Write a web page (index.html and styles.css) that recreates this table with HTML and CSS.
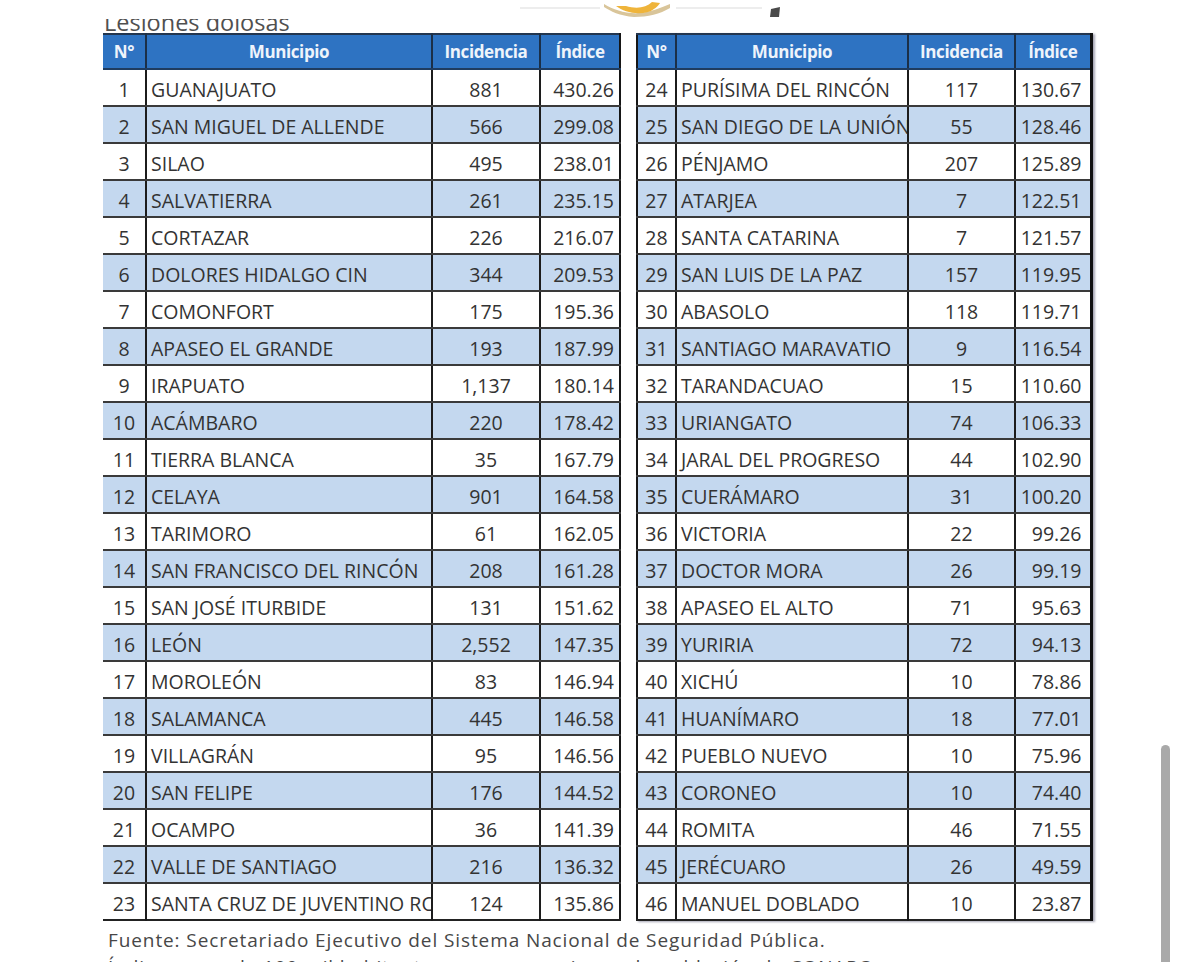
FILE: index.html
```html
<!DOCTYPE html>
<html lang="es">
<head>
<meta charset="utf-8">
<title>Lesiones dolosas</title>
<link rel="stylesheet" href="styles.css">
</head>
<body>
<div class="page">
  <div class="topstrip">
    <svg class="logo-bits" width="1179" height="19" viewBox="0 0 1179 19">
      <line x1="520" y1="8" x2="600" y2="8" stroke="#ededed" stroke-width="2"/>
      <line x1="676" y1="8" x2="762" y2="8" stroke="#ededed" stroke-width="2"/>
      <path d="M604 4 C614 10 626 14 640 13 C650 12 660 8 670 4 L670 8 C660 14 648 17 634 17 C620 16 610 11 604 7 Z" fill="#d9c59a"/>
      <path d="M616 6 C624 12 636 15 648 12 C654 10 658 6 660 3 L652 2 C646 8 636 9 626 6 Z" fill="#efb43a"/>
      <path d="M771 9 L780 7 L779 17 L770 17 Z" fill="#4a4a4a"/>
    </svg>
  </div>
  <div class="titlebox"><span class="title">Lesiones dolosas</span></div>
  <div class="tables">
    <table class="tbl tbl-left">
      <colgroup><col class="c-n1"><col class="c-m1"><col class="c-i1"><col class="c-x1"></colgroup>
      <thead><tr><th>N°</th><th>Municipio</th><th>Incidencia</th><th>Índice</th></tr></thead>
      <tbody>
        <tr><td class="n">1</td><td class="m">GUANAJUATO</td><td class="i">881</td><td class="x">430.26</td></tr>
        <tr><td class="n">2</td><td class="m">SAN MIGUEL DE ALLENDE</td><td class="i">566</td><td class="x">299.08</td></tr>
        <tr><td class="n">3</td><td class="m">SILAO</td><td class="i">495</td><td class="x">238.01</td></tr>
        <tr><td class="n">4</td><td class="m">SALVATIERRA</td><td class="i">261</td><td class="x">235.15</td></tr>
        <tr><td class="n">5</td><td class="m">CORTAZAR</td><td class="i">226</td><td class="x">216.07</td></tr>
        <tr><td class="n">6</td><td class="m">DOLORES HIDALGO CIN</td><td class="i">344</td><td class="x">209.53</td></tr>
        <tr><td class="n">7</td><td class="m">COMONFORT</td><td class="i">175</td><td class="x">195.36</td></tr>
        <tr><td class="n">8</td><td class="m">APASEO EL GRANDE</td><td class="i">193</td><td class="x">187.99</td></tr>
        <tr><td class="n">9</td><td class="m">IRAPUATO</td><td class="i">1,137</td><td class="x">180.14</td></tr>
        <tr><td class="n">10</td><td class="m">ACÁMBARO</td><td class="i">220</td><td class="x">178.42</td></tr>
        <tr><td class="n">11</td><td class="m">TIERRA BLANCA</td><td class="i">35</td><td class="x">167.79</td></tr>
        <tr><td class="n">12</td><td class="m">CELAYA</td><td class="i">901</td><td class="x">164.58</td></tr>
        <tr><td class="n">13</td><td class="m">TARIMORO</td><td class="i">61</td><td class="x">162.05</td></tr>
        <tr><td class="n">14</td><td class="m">SAN FRANCISCO DEL RINCÓN</td><td class="i">208</td><td class="x">161.28</td></tr>
        <tr><td class="n">15</td><td class="m">SAN JOSÉ ITURBIDE</td><td class="i">131</td><td class="x">151.62</td></tr>
        <tr><td class="n">16</td><td class="m">LEÓN</td><td class="i">2,552</td><td class="x">147.35</td></tr>
        <tr><td class="n">17</td><td class="m">MOROLEÓN</td><td class="i">83</td><td class="x">146.94</td></tr>
        <tr><td class="n">18</td><td class="m">SALAMANCA</td><td class="i">445</td><td class="x">146.58</td></tr>
        <tr><td class="n">19</td><td class="m">VILLAGRÁN</td><td class="i">95</td><td class="x">146.56</td></tr>
        <tr><td class="n">20</td><td class="m">SAN FELIPE</td><td class="i">176</td><td class="x">144.52</td></tr>
        <tr><td class="n">21</td><td class="m">OCAMPO</td><td class="i">36</td><td class="x">141.39</td></tr>
        <tr><td class="n">22</td><td class="m">VALLE DE SANTIAGO</td><td class="i">216</td><td class="x">136.32</td></tr>
        <tr><td class="n">23</td><td class="m"><div class="clip">SANTA CRUZ DE JUVENTINO ROSAS</div></td><td class="i">124</td><td class="x">135.86</td></tr>
      </tbody>
    </table>
    <table class="tbl tbl-right">
      <colgroup><col class="c-n2"><col class="c-m2"><col class="c-i2"><col class="c-x2"></colgroup>
      <thead><tr><th>N°</th><th>Municipio</th><th>Incidencia</th><th>Índice</th></tr></thead>
      <tbody>
        <tr><td class="n">24</td><td class="m">PURÍSIMA DEL RINCÓN</td><td class="i">117</td><td class="x">130.67</td></tr>
        <tr><td class="n">25</td><td class="m"><div class="clip">SAN DIEGO DE LA UNIÓN</div></td><td class="i">55</td><td class="x">128.46</td></tr>
        <tr><td class="n">26</td><td class="m">PÉNJAMO</td><td class="i">207</td><td class="x">125.89</td></tr>
        <tr><td class="n">27</td><td class="m">ATARJEA</td><td class="i">7</td><td class="x">122.51</td></tr>
        <tr><td class="n">28</td><td class="m">SANTA CATARINA</td><td class="i">7</td><td class="x">121.57</td></tr>
        <tr><td class="n">29</td><td class="m">SAN LUIS DE LA PAZ</td><td class="i">157</td><td class="x">119.95</td></tr>
        <tr><td class="n">30</td><td class="m">ABASOLO</td><td class="i">118</td><td class="x">119.71</td></tr>
        <tr><td class="n">31</td><td class="m">SANTIAGO MARAVATIO</td><td class="i">9</td><td class="x">116.54</td></tr>
        <tr><td class="n">32</td><td class="m">TARANDACUAO</td><td class="i">15</td><td class="x">110.60</td></tr>
        <tr><td class="n">33</td><td class="m">URIANGATO</td><td class="i">74</td><td class="x">106.33</td></tr>
        <tr><td class="n">34</td><td class="m">JARAL DEL PROGRESO</td><td class="i">44</td><td class="x">102.90</td></tr>
        <tr><td class="n">35</td><td class="m">CUERÁMARO</td><td class="i">31</td><td class="x">100.20</td></tr>
        <tr><td class="n">36</td><td class="m">VICTORIA</td><td class="i">22</td><td class="x">99.26</td></tr>
        <tr><td class="n">37</td><td class="m">DOCTOR MORA</td><td class="i">26</td><td class="x">99.19</td></tr>
        <tr><td class="n">38</td><td class="m">APASEO EL ALTO</td><td class="i">71</td><td class="x">95.63</td></tr>
        <tr><td class="n">39</td><td class="m">YURIRIA</td><td class="i">72</td><td class="x">94.13</td></tr>
        <tr><td class="n">40</td><td class="m">XICHÚ</td><td class="i">10</td><td class="x">78.86</td></tr>
        <tr><td class="n">41</td><td class="m">HUANÍMARO</td><td class="i">18</td><td class="x">77.01</td></tr>
        <tr><td class="n">42</td><td class="m">PUEBLO NUEVO</td><td class="i">10</td><td class="x">75.96</td></tr>
        <tr><td class="n">43</td><td class="m">CORONEO</td><td class="i">10</td><td class="x">74.40</td></tr>
        <tr><td class="n">44</td><td class="m">ROMITA</td><td class="i">46</td><td class="x">71.55</td></tr>
        <tr><td class="n">45</td><td class="m">JERÉCUARO</td><td class="i">26</td><td class="x">49.59</td></tr>
        <tr><td class="n">46</td><td class="m">MANUEL DOBLADO</td><td class="i">10</td><td class="x">23.87</td></tr>
      </tbody>
    </table>
  </div>
  <div class="footer">
    <p class="note">Fuente: Secretariado Ejecutivo del Sistema Nacional de Seguridad Pública.</p>
    <p class="note">Índice por cada 100 mil habitantes, con proyecciones de población de CONAPO.</p>
  </div>
</div>
<div class="scrollbar"></div>
</body>
</html>
```
FILE: styles.css
```css
html, body {
  margin: 0;
  padding: 0;
  background: #ffffff;
  overflow: hidden;
  height: 962px;
}
body {
  font-family: "Open Sans", "Noto Sans", "DejaVu Sans", sans-serif;
  color: #333333;
  position: relative;
}
.page {
  width: 1179px;
}
.topstrip {
  height: 19px;
  overflow: hidden;
}
.logo-bits {
  display: block;
}
.titlebox {
  height: 14px;
  overflow: hidden;
  padding-left: 104px;
}
.title {
  display: block;
  font-size: 23.5px;
  line-height: 24px;
  color: #505050;
  margin-top: -9px;
}
.tables {
  display: flex;
  gap: 15px;
  padding-left: 103px;
  align-items: flex-start;
}
.tbl {
  border-collapse: collapse;
  table-layout: fixed;
  border-top: 2px solid #23364f;
  border-bottom: 2px solid #222;
}
.tbl-left { width: 517px; border-right: 2px solid #161616; }
.tbl-right {
  width: 454px;
  border-left: 2px solid #161616;
  border-right: 3px solid #111;
  box-shadow: 2px 1px 2px rgba(60, 60, 90, 0.45);
}
.c-n1 { width: 43px; }
.c-m1 { width: 286px; }
.c-i1 { width: 108px; }
.c-x1 { width: 80px; }
.c-n2 { width: 39px; }
.c-m2 { width: 232px; }
.c-i2 { width: 107px; }
.c-x2 { width: 76px; }

.tbl th {
  background: #2e73c2;
  color: #eef4fb;
  font-weight: 700;
  font-size: 17px;
  height: 33px;
  padding: 0;
  letter-spacing: -0.4px;
  border-bottom: 2px solid #1f3c60;
  border-left: 2px solid #1b2f47;
  white-space: nowrap;
  overflow: hidden;
}
.tbl th:first-child { border-left: none; }

.tbl td {
  height: 37px;
  padding: 4px 0 0 0;
  box-sizing: border-box;
  font-size: 19.5px;
  border-bottom: 2px solid #3a3a3a;
  border-left: 2px solid #1c1c1c;
  white-space: nowrap;
  overflow: hidden;
}
.tbl tr:last-child td { border-bottom: none; }
.tbl tbody tr:nth-child(even) td { background: #c4d8ef; }
.tbl td:first-child { border-left: none; }
.tbl td.n { text-align: center; }
.tbl td.m { text-align: left; padding-left: 4px; }
.tbl td.i { text-align: center; }
.tbl td.x { text-align: right; padding-right: 5px; }
.tbl-right td.x { padding-right: 8px; }
.clip {
  overflow: hidden;
  white-space: nowrap;
}

.footer {
  padding: 6px 0 0 108px;
}
.note {
  margin: 0;
  font-size: 19px;
  line-height: 27px;
  color: #474747;
  letter-spacing: 0.9px;
  white-space: nowrap;
}
.scrollbar {
  position: absolute;
  left: 1161px;
  top: 745px;
  width: 9px;
  height: 230px;
  background: #a9a9a9;
  border-radius: 5px 5px 0 0;
}
```
